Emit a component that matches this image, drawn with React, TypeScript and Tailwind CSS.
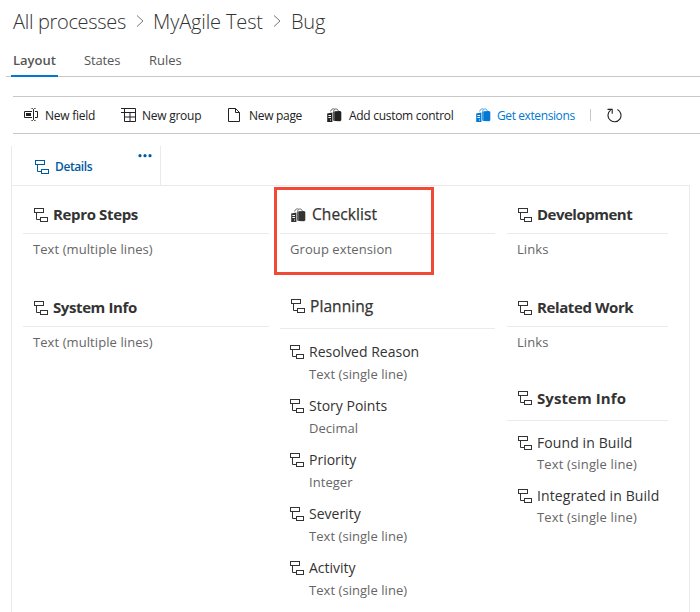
import type { ReactNode } from "react";

function TreeIcon() {
  return (
    <svg width="14" height="14" viewBox="0 0 14 14" fill="none" stroke="currentColor" className="shrink-0">
      <rect x="0.5" y="0.5" width="9" height="4" />
      <path d="M2.5 4.5V11.5H6.5" />
      <rect x="6.5" y="9.5" width="7" height="4" />
    </svg>
  );
}

function BagIcon() {
  return (
    <svg width="15" height="14" viewBox="0 0 15 14" className="shrink-0">
      <path d="M3.6 3.4C4 1.2 6 .6 7.4 .8M6.6 3.5C6.8.2 11 .1 11.3 3.2" fill="none" stroke="currentColor" strokeOpacity=".7" />
      <path d="M6 3.5L7.6 3.9V13L6 12.4Z" fill="currentColor" fillOpacity=".75" />
      <path d="M7.4 3.2L13.2 3L14.3 4V12.2L13.2 13.2L7.4 13Z" fill="currentColor" />
      <path d="M.2 5.6L5.4 4.6V14H.2Z" fill="currentColor" />
      <path d="M1.4 7.5H4M1.4 9.5H4M3 12H4" stroke="#fff" />
    </svg>
  );
}

function FieldIcon() {
  return (
    <svg width="14" height="14" viewBox="0 0 14 14" fill="none" stroke="currentColor">
      <path d="M8 3.5H.5V9.5H8M11 3.5H13.5V9.5H11" />
      <path d="M2 6.5H7" strokeWidth="3" />
      <path d="M9.5 1.5V11.5M7.5 .5H8.5L9.5 1.5L10.5 .5H11.5M7.5 12.5H8.5L9.5 11.5L10.5 12.5H11.5" />
    </svg>
  );
}

function GridIcon() {
  return (
    <svg width="15" height="14" viewBox="0 0 15 14" fill="none" stroke="currentColor">
      <path d="M0 .5H14.5V13.5H3.5V.5M0 4.5H14.5M3.5 9H14.5M9 4.5V13.5" />
    </svg>
  );
}

function PageIcon() {
  return (
    <svg width="12" height="14" viewBox="0 0 12 14" fill="none" stroke="currentColor">
      <path d="M.5 .5H7.5L11.5 4.5V13.5H.5ZM7.5 .5V4.5H11.5" />
    </svg>
  );
}

function RefreshIcon() {
  return (
    <svg width="15" height="15" viewBox="0 0 15 15" fill="none" stroke="currentColor">
      <path d="M10.4 1.5A6.5 6.5 0 1 1 3.6 2.1" strokeWidth="1.1" />
      <path d="M.5 1.4H5.2V5.7" strokeWidth="1.1" />
    </svg>
  );
}

function Chevron() {
  return (
    <svg width="8" height="12" viewBox="0 0 8 12" fill="none" stroke="#777" className="mb-[3px]">
      <path d="M1 .5L7 6L1 11.5" />
    </svg>
  );
}

function Tool({ icon, className = "", textClass = "", children }: { icon: ReactNode; className?: string; textClass?: string; children: string }) {
  return (
    <button className={"flex items-center whitespace-nowrap text-[12px] " + className}>
      <span className="flex w-[21px] shrink-0">{icon}</span>
      <span className={"pt-[2px] " + textClass}>{children}</span>
    </button>
  );
}

function Heading({ icon, className = "h-[38px] pl-[11px]", textClass = "pb-[2px]", children }: { icon?: ReactNode; className?: string; textClass?: string; children: string }) {
  return (
    <h2 className={"flex items-center gap-[5px] whitespace-nowrap border-b border-[#eaeaea] pt-px text-[15px] " + className}>
      {icon ?? <TreeIcon />}
      <span className={textClass}>{children}</span>
    </h2>
  );
}

function Desc({ children }: { children: string }) {
  return (
    <p className="flex h-[30px] items-center pl-[10px] pt-[2px] text-[13px] tracking-[0.08px] text-[#666]">{children}</p>
  );
}

function Field({ name, type, className = "", typeClass = "" }: { name: string; type: string; className?: string; typeClass?: string }) {
  return (
    <li className={className}>
      <div className="flex h-[22px] items-center gap-[5px] whitespace-nowrap text-[14px]">
        <TreeIcon />
        <span className="pb-[2px]">{name}</span>
      </div>
      <div className={"flex h-[22px] items-center pl-[19px] text-[13px] text-[#666] " + typeClass}>{type}</div>
    </li>
  );
}

const planning = [
  ["Resolved Reason", "Text (single line)"],
  ["Story Points", "Decimal"],
  ["Priority", "Integer"],
  ["Severity", "Text (single line)"],
  ["Activity", "Text (single line)"],
];

export default function App() {
  return (
    <main className="h-[612px] w-[700px] overflow-hidden bg-white font-['Open_Sans','Noto_Sans',sans-serif] text-[#333]">
      <nav className="flex h-11 items-center whitespace-nowrap pl-[13px] text-[20px] font-light">
        <span className="w-[123px] tracking-[-0.32px]">All processes</span>
        <Chevron />
        <span className="ml-[9px] w-[120px] tracking-[-0.14px]">MyAgile Test</span>
        <Chevron />
        <span className="ml-[10px] tracking-[-0.2px]">Bug</span>
      </nav>

      <div className="ml-[6px] flex h-[33px] border-b border-[#c8c8c8] pl-[5px] text-[13px] text-[#555]">
        <div className="h-[33px] w-[47px] border-b-2 border-[#0078d4] pl-[2px] pt-[7px] font-semibold">Layout</div>
        <div className="ml-[26px] w-[65px] pt-[7px] tracking-[-0.15px]">States</div>
        <div className="pt-[7px]">Rules</div>
      </div>

      <div className="ml-[13px] mt-[19px] grid h-[38px] grid-cols-[97px_107px_99px_149px_114px_17px_auto] items-center border-y border-[#c8c8c8] pl-[11px] text-[#222]">
        <Tool icon={<FieldIcon />} className="tracking-[-0.25px]">New field</Tool>
        <Tool icon={<GridIcon />} className="tracking-[-0.25px]">New group</Tool>
        <Tool icon={<PageIcon />} className="tracking-[-0.3px]">New page</Tool>
        <Tool icon={<BagIcon />} className="tracking-[-0.29px]" textClass="pl-px">Add custom control</Tool>
        <Tool icon={<BagIcon />} className="tracking-[-0.4px] text-[#0078d4]">Get extensions</Tool>
        <span className="h-3 w-px bg-[#c8c8c8]" />
        <RefreshIcon />
      </div>

      <div className="ml-[11px] mt-[12px] flex h-[39px] w-[150px] border-x border-[#eaeaea] text-[#005a9e]">
        <div className="flex h-[41px] w-[126px] items-center gap-[6px] pl-[23px] text-[12px] font-semibold tracking-[-0.4px]">
          <TreeIcon />
          Details
        </div>
        <svg width="14" height="4" viewBox="0 0 14 4" fill="currentColor" className="mt-2">
          <circle cx="2" cy="1.7" r="1.6" />
          <circle cx="7" cy="1.7" r="1.6" />
          <circle cx="12" cy="1.7" r="1.6" />
        </svg>
      </div>

      <div className="ml-[11px] flex h-[427px] w-[679px] border-x border-t border-[#eaeaea] pl-[11px] pt-[10px]">
        <section className="w-[246px]">
          <Heading className="h-[38px] pl-[11px] font-bold tracking-[-0.36px]">Repro Steps</Heading>
          <Desc>Text (multiple lines)</Desc>
          <Heading className="mt-[25px] h-[38px] pl-[11px] font-bold tracking-[-0.4px]">System Info</Heading>
          <Desc>Text (multiple lines)</Desc>
        </section>

        <section className="relative ml-[11px] w-[215px]">
          <Heading
            icon={<BagIcon />}
            className="h-[38px] pl-[10.5px] [-webkit-text-stroke:0.25px]"
            textClass="pl-[1.5px] text-[15.5px] tracking-[0.08px]"
          >
            Checklist
          </Heading>
          <Desc>Group extension</Desc>
          <div className="absolute -left-[6px] -top-[9px] h-[88px] w-[160px] border-[3px] border-[#f04a37]" />
          <Heading
            className="mt-[22px] h-[43px] pb-[3px] pl-[11px] [-webkit-text-stroke:0.25px]"
            textClass="pt-[2px] text-[15.5px] tracking-[0.08px]"
          >
            Planning
          </Heading>
          <ul className="mt-3">
            {planning.map(([name, type]) => (
              <Field key={name} name={name} type={type} className="h-[54px] pl-[10px]" typeClass="pt-[2px] tracking-[0.05px]" />
            ))}
          </ul>
        </section>

        <section className="ml-[12px] w-[161px]">
          <Heading className="h-[38px] pl-[11px] font-bold tracking-[-0.5px]">Development</Heading>
          <Desc>Links</Desc>
          <Heading className="mt-[25px] h-[38px] pl-[11px] font-bold tracking-[-0.4px]">Related Work</Heading>
          <Desc>Links</Desc>
          <Heading className="mt-[20px] h-[44px] pb-[2px] pl-[11px] font-bold tracking-[0.08px]" textClass="">System Info</Heading>
          <ul className="mt-[11px]">
            <Field name="Found in Build" type="Text (single line)" className="h-[53px] pl-[11px] tracking-[0.1px]" typeClass="tracking-[0.15px]" />
            <Field name="Integrated in Build" type="Text (single line)" className="h-[53px] pl-[11px] tracking-[0.1px]" typeClass="tracking-[0.15px]" />
          </ul>
        </section>
      </div>
    </main>
  );
}
